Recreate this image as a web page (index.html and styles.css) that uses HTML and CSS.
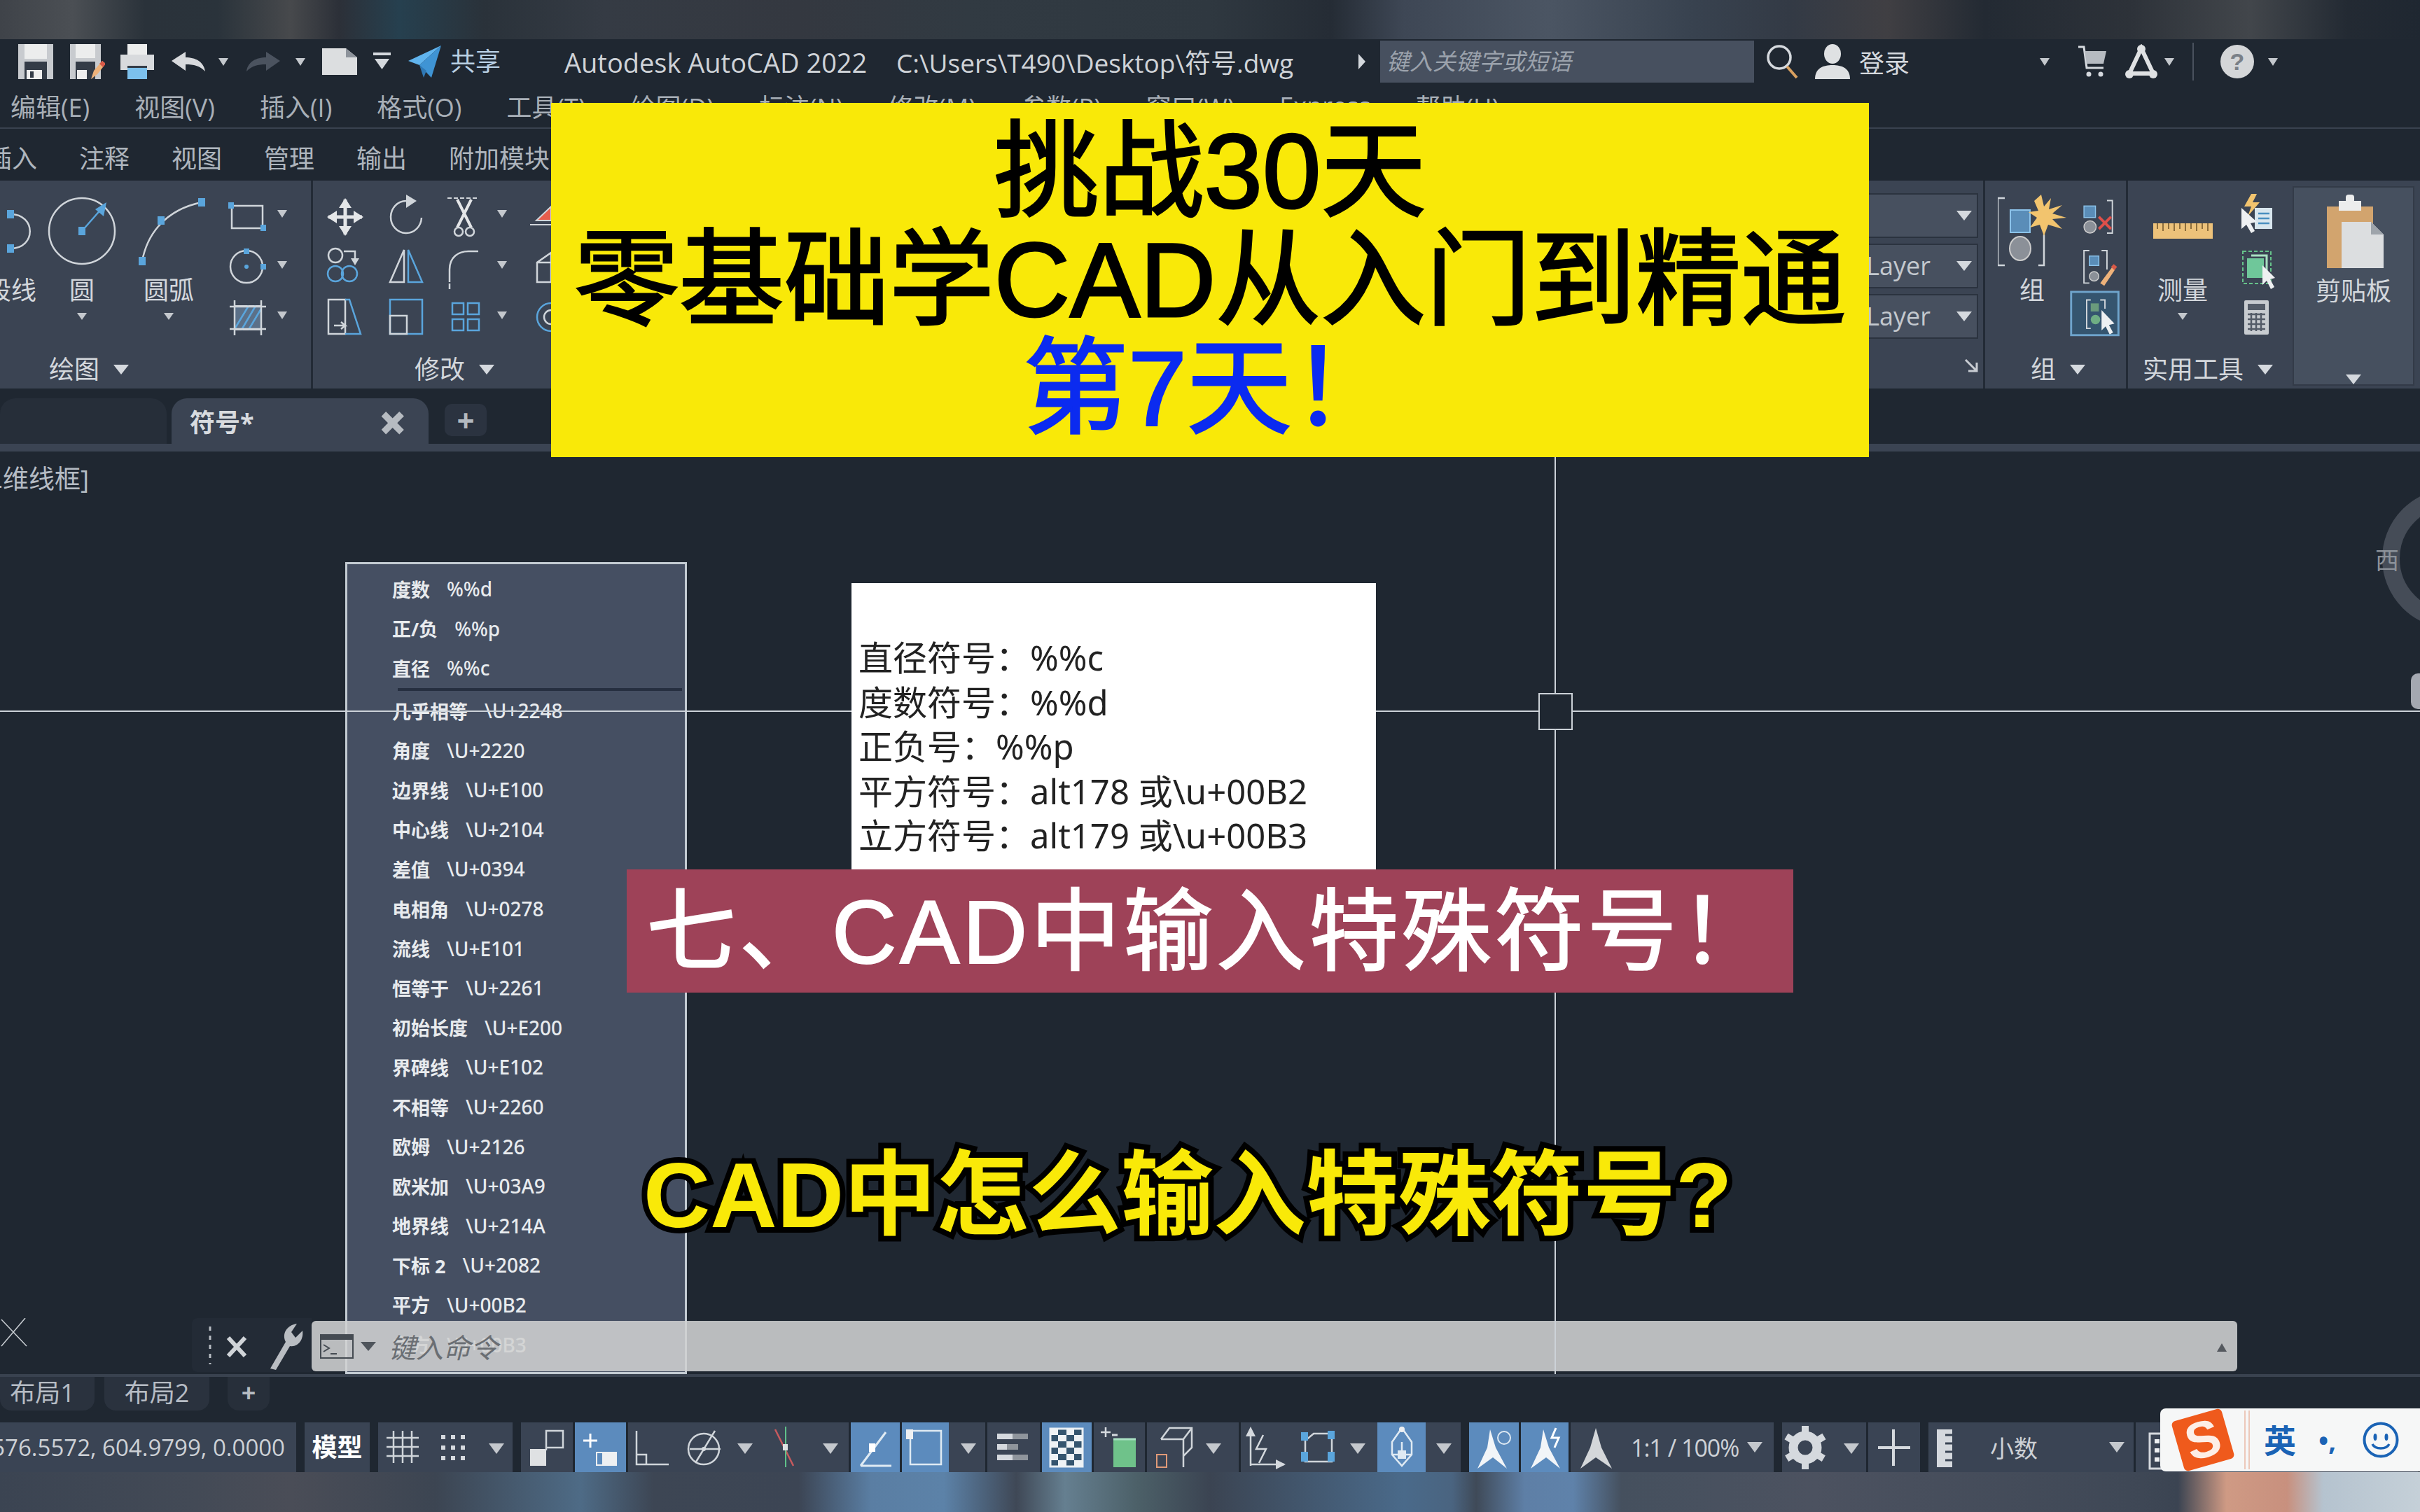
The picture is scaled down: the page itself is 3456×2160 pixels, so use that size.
FILE: index.html
```html
<!DOCTYPE html>
<html lang="zh-CN">
<head>
    <meta charset="UTF-8">
    <title>AutoCAD 2022 - 符号.dwg</title>
    <link rel="stylesheet" href="styles.css">
</head>
<body>
<div class="app">
    <div class="strip strip-top"></div>

    <!-- Title bar -->
    <header class="titlebar">
        <div class="qat">
            <svg width="50" height="50" viewBox="0 0 50 50"><rect width="50" height="50" fill="#c8cbcf"/><rect x="9" y="0" width="32" height="21" fill="#eceded"/><rect x="9" y="25" width="32" height="25" fill="#343c47"/><rect x="12" y="37" width="22" height="13" fill="#eee"/><rect x="17" y="39" width="5" height="9" fill="#343c47"/></svg>
            <svg width="50" height="50" viewBox="0 0 50 50"><rect width="44" height="50" fill="#c8cbcf"/><rect x="8" y="0" width="28" height="20" fill="#eceded"/><rect x="8" y="25" width="28" height="25" fill="#343c47"/><rect x="10" y="37" width="14" height="13" fill="#eee"/><path d="M30 50l4-12 12-14 5 4-12 15z" fill="#eeb27a"/><path d="M42 28l4-4 5 4-4 5z" fill="#d85a48"/></svg>
            <svg width="48" height="50" viewBox="0 0 48 50"><rect x="10" width="28" height="15" fill="#eceded"/><rect y="15" width="48" height="22" fill="#d8dadd"/><rect x="10" y="33" width="28" height="17" fill="#7cc0ec"/><rect x="10" y="31" width="28" height="3" fill="#343c47"/></svg>
            <svg width="48" height="28" viewBox="0 0 48 28"><path d="M0 13L20 0v8c14 0 26 6 28 20C40 20 32 18 20 18v9z" fill="#d8dadd"/></svg>
            <i class="qcaret"></i>
            <svg width="48" height="28" viewBox="0 0 48 28"><path d="M48 13L28 0v8C14 8 2 14 0 28c8-8 16-10 28-10v9z" fill="#4b535f"/></svg>
            <i class="qcaret"></i>
            <svg width="50" height="38" viewBox="0 0 50 38"><path d="M0 0H34L50 13V38H0z" fill="#dcdee0"/><path d="M34 0V13H50z" fill="#8d939b"/></svg>
            <svg width="25" height="26" viewBox="0 0 25 26"><rect width="25" height="4" fill="#d5d9de"/><path d="M2 9H23L12.500 24z" fill="#d5d9de"/></svg>
            <svg width="47" height="46" viewBox="0 0 47 46"><path d="M47 0L0 22 16 28z" fill="#60b4ee"/><path d="M47 0L16 28 33 46z" fill="#3f94d4"/><path d="M16 28L22 46 26 36z" fill="#2f78b4"/></svg>
            <span class="share">共享</span>
        </div>
        <div class="doc-title">Autodesk AutoCAD 2022&nbsp;&nbsp;&nbsp;<span class="doc-path">C:\Users\T490\Desktop\符号.dwg</span></div>
        <i class="tri-right"></i>
        <div class="search">键入关键字或短语</div>
        <svg class="ico-search" width="46" height="50" viewBox="0 0 46 50"><circle cx="19" cy="19" r="16" fill="none" stroke="#d5d9de" stroke-width="3.500"/><path d="M30 32L44 48" stroke="#d8a060" stroke-width="4"/></svg>
        <svg class="ico-user" width="50" height="50" viewBox="0 0 50 50"><ellipse cx="25" cy="14" rx="12" ry="14" fill="#dfe1e3"/><path d="M0 50C0 34 12 30 25 30s25 4 25 20z" fill="#dfe1e3"/></svg>
        <span class="login">登录</span>
        <i class="qcaret login-caret"></i>
        <svg class="ico-cart" width="40" height="46" viewBox="0 0 40 46"><path d="M0 2H8L12 32H36" fill="none" stroke="#d5d9de" stroke-width="3"/><path d="M9 8H40L36 26H12z" fill="#b6bbc1"/><circle cx="15" cy="41" r="3.500" fill="#d5d9de"/><circle cx="32" cy="41" r="3.500" fill="#d5d9de"/></svg>
        <svg class="ico-a360" width="46" height="50" viewBox="0 0 46 50"><path d="M23 6L6 42H40z" fill="none" stroke="#dfe1e3" stroke-width="6"/><circle cx="23" cy="7" r="6" fill="#dfe1e3"/><circle cx="6" cy="43" r="6" fill="#dfe1e3"/><circle cx="40" cy="43" r="6" fill="#dfe1e3"/></svg>
        <i class="qcaret a360-caret"></i>
        <b class="title-sep"></b>
        <div class="help">?</div>
        <i class="qcaret help-caret"></i>
    </header>

    <!-- Menu bar -->
    <nav class="menubar">
        <span>编辑(E)</span><span>视图(V)</span><span>插入(I)</span><span>格式(O)</span><span>工具(T)</span><span>绘图(D)</span><span>标注(N)</span><span>修改(M)</span><span>参数(P)</span><span>窗口(W)</span><span>Express</span><span>帮助(H)</span>
    </nav>

    <!-- Ribbon tabs -->
    <nav class="ribbon-tabs">
        <span class="cut">插入</span><span>注释</span><span>视图</span><span>管理</span><span>输出</span><span>附加模块</span>
    </nav>

    <!-- Ribbon -->
    <section class="ribbon">
        <div class="panel panel-draw">
            <div class="panel-body">
                <div class="big big-pline">
                    <svg width="52" height="110" viewBox="0 0 52 110"><path d="M15 31C52 31 52 80 15 80" class="ln"/><rect x="10" y="25" width="10" height="12" class="grip"/><rect x="10" y="74" width="10" height="12" class="grip"/></svg>
                    <span class="cut-label">段线</span>
                </div>
                <div class="big big-circle">
                    <svg width="110" height="110" viewBox="0 0 110 110"><circle cx="55" cy="55" r="47" class="ln"/><path d="M55 55L84 22" class="blu"/><path d="M74 24L90 14 86 34z" fill="#5aa5dc"/><rect x="50" y="49" width="10" height="12" class="grip"/></svg>
                    <span>圆</span><i class="sm-caret"></i>
                </div>
                <div class="big big-arc">
                    <svg width="118" height="110" viewBox="0 0 118 110"><path d="M21 98C27 66 48 26 106 14" class="ln"/><rect x="16" y="92" width="10" height="12" class="grip"/><rect x="43" y="34" width="10" height="12" class="grip"/><rect x="101" y="8" width="10" height="12" class="grip"/></svg>
                    <span>圆弧</span><i class="sm-caret"></i>
                </div>
                <svg class="draw-small" width="130" height="220" viewBox="0 0 130 220">
                    <rect x="21" y="19" width="44" height="32" class="ln"/><rect x="16" y="14" width="8" height="9" class="grip"/><rect x="62" y="46" width="8" height="9" class="grip"/>
                    <path d="M86 25h14l-7 11z" class="car"/>
                    <circle cx="42" cy="106" r="23" class="ln"/><circle cx="42" cy="106" r="3" class="grip"/><rect x="38" y="80" width="8" height="8" class="grip"/><rect x="62" y="102" width="8" height="8" class="grip"/>
                    <path d="M86 98h14l-7 11z" class="car"/>
                    <rect x="25" y="162" width="38" height="34" fill="#5b7088" stroke="#d0d5da" stroke-width="2"/><path d="M25 195L45 162M35 196L55 162M45 196L63 166" class="blu"/><path d="M18 163H70M18 195H70M25 154V204M63 154V204" class="ln"/>
                    <path d="M86 170h14l-7 11z" class="car"/>
                </svg>
            </div>
            <div class="panel-foot">绘图<i class="foot-caret"></i></div>
        </div>

        <div class="panel panel-modify">
            <div class="panel-body">
                <svg width="342" height="225" viewBox="0 0 342 225">
                    <path d="M46 10V60M22 35H70" stroke="#e4e6e8" stroke-width="5"/><path d="M46 8l-9 14h18zM46 62l-9-14h18zM20 35l14-9v18zM72 35l-14-9v18z" fill="#e4e6e8"/>
                    <path d="M133 12A22 23 0 1 0 155 36" class="ln"/><path d="M133 3l15 9-15 10z" fill="#d0d5da"/>
                    <path d="M192 8H236" stroke="#d0d5da" stroke-width="2" stroke-dasharray="6 3"/><path d="M206 10L226 50M226 10L206 50" stroke="#e4e6e8" stroke-width="4"/><circle cx="208" cy="56" r="6" class="ln"/><circle cx="224" cy="56" r="6" class="ln"/>
                    <path d="M263 25h14l-7 11z" class="car"/>
                    <path d="M319 40L340 20V40zM310 46H340" fill="#e85d4c" stroke="#d0d5da" stroke-width="2"/>
                    <circle cx="32" cy="90" r="10" class="ln"/><path d="M44 84H60V100" class="ln"/><path d="M60 104l-6-10h12z" fill="#d0d5da"/><circle cx="32" cy="116" r="11" class="blu"/><circle cx="52" cy="116" r="11" class="blu"/>
                    <path d="M110 128L130 82V128z" class="ln"/><path d="M136 82V128H156z" class="blu"/>
                    <path d="M195 128V110C195 92 208 84 222 84" class="ln"/><path d="M222 84H236M195 130V138" class="ln"/>
                    <path d="M263 98h14l-7 11z" class="car"/>
                    <path d="M320 128V100L340 86V128zM320 100H340" class="ln"/>
                    <path d="M22 153H46V202H22z" class="ln"/><path d="M46 153H52L68 202H46" class="blu"/><path d="M30 190H46l-6-5M46 190l-6 5" class="ln"/>
                    <path d="M110 153H156V202H110z" class="blu"/><path d="M110 176H134V202H110z" class="ln"/>
                    <path d="M199 158h16v16h-16zM221 158h16v16h-16zM199 181h16v16h-16zM221 181h16v16h-16z" class="blu"/>
                    <path d="M263 170h14l-7 11z" class="car"/>
                    <circle cx="340" cy="178" r="20" class="blu"/><circle cx="340" cy="178" r="10" class="ln"/>
                </svg>
            </div>
            <div class="panel-foot">修改<i class="foot-caret"></i></div>
        </div>

        <div class="panel panel-layer">
            <div class="combo"><i class="foot-caret"></i></div>
            <div class="combo">ByLayer<i class="foot-caret"></i></div>
            <div class="combo">ByLayer<i class="foot-caret"></i></div>
            <svg class="corner" width="20" height="20" viewBox="0 0 20 20"><path d="M2 2L18 18M18 6V18H6" fill="none" stroke="#c8ccd2" stroke-width="3"/></svg>
        </div>

        <div class="panel panel-group">
            <div class="panel-body">
                <div class="big big-group">
                    <svg width="98" height="110" viewBox="0 0 98 110">
                        <path d="M10 8H0V104H10M66 60V104H58" fill="none" stroke="#d0d5da" stroke-width="2.500"/>
                        <rect x="18" y="25" width="28" height="32" fill="#5a8db8" stroke="#8cc3ea" stroke-width="2"/>
                        <ellipse cx="32" cy="80" rx="15" ry="17" fill="#8b9098" stroke="#ccc" stroke-width="2"/>
                        <path d="M62 3L66 20 76 8 73 24 92 18 78 30 98 36 78 38 92 52 72 46 66 62 60 46 46 50 56 36 44 28 58 26 52 12z" fill="#f2c46e"/>
                    </svg>
                    <span>组</span>
                </div>
                <svg width="88" height="225" viewBox="0 0 88 225">
                    <path d="M60 8H68V56H60" fill="none" stroke="#d0d5da" stroke-width="2"/><rect x="26" y="16" width="17" height="17" fill="#5a8db8" stroke="#8cc3ea" stroke-width="1.500"/><circle cx="35" cy="47" r="9" fill="#8b9098" stroke="#ccc" stroke-width="1.500"/><path d="M48 32L66 50M66 32L48 50" stroke="#e0504a" stroke-width="4"/>
                    <path d="M34 82H26V130H34M52 82H60V110" fill="none" stroke="#d0d5da" stroke-width="2"/><rect x="34" y="90" width="14" height="14" fill="#5a8db8" stroke="#8cc3ea" stroke-width="1.500"/><circle cx="41" cy="120" r="7" fill="#8b9098" stroke="#ccc" stroke-width="1.500"/><path d="M50 130L68 106 72 110 56 134z" fill="#eeb27a"/><path d="M66 106l4-4 5 4-4 5z" fill="#d85a48"/>
                    <rect x="7" y="143" width="70" height="64" fill="#35556f" stroke="#6fa5cd" stroke-width="3"/>
                    <path d="M36 155H30V197H36M50 155H57V168" fill="none" stroke="#d0d5da" stroke-width="2"/><rect x="36" y="160" width="12" height="12" fill="#6a9a7c"/><circle cx="43" cy="184" r="7" fill="#6fae84"/><path d="M52 170V200L58 194 64 206 69 203 63 192 71 190z" fill="#eef0f2"/>
                </svg>
            </div>
            <div class="panel-foot">组<i class="foot-caret"></i></div>
        </div>

        <div class="panel panel-util">
            <div class="panel-body">
                <div class="big big-measure">
                    <svg width="156" height="110" viewBox="0 0 156 110"><rect x="36" y="44" width="85" height="22" fill="#edc27a"/><path d="M42 44V52M50 44V55M58 44V52M66 44V55M74 44V52M82 44V55M90 44V52M98 44V55M106 44V52M114 44V55" stroke="#8d6e3c" stroke-width="2"/></svg>
                    <span>测量</span><i class="sm-caret"></i>
                </div>
                <svg width="75" height="225" viewBox="0 0 75 225">
                    <path d="M20 2L10 20H20L15 34 32 14H22L28 2z" fill="#f2c46e"/><rect x="25" y="22" width="25" height="30" fill="#d8e6ee"/><path d="M30 30H46M30 37H46M30 44H46" stroke="#4a8fc0" stroke-width="2.500"/><path d="M6 22V52L13 46 20 58 25 55 19 44 28 42z" fill="#eef0f2"/>
                    <rect x="8" y="84" width="40" height="46" fill="none" stroke="#66c28a" stroke-width="2" stroke-dasharray="5 3"/><rect x="14" y="94" width="24" height="28" fill="#6fc79a"/><path d="M20 90H42V112" fill="none" stroke="#a9e0c2" stroke-width="3"/><path d="M36 104V132L42 126 48 138 53 135 47 124 54 122z" fill="#eef0f2"/>
                    <rect x="10" y="154" width="35" height="49" rx="2" fill="#c8ccd0"/><rect x="15" y="159" width="25" height="9" fill="#545c68"/><path d="M15 174H40M15 181H40M15 188H40M15 195H40M20 172V198M27 172V198M34 172V198" stroke="#545c68" stroke-width="2.500"/>
                </svg>
            </div>
            <div class="panel-foot">实用工具<i class="foot-caret"></i></div>
        </div>

        <div class="panel panel-clip">
            <svg width="174" height="110" viewBox="0 0 174 110">
                <rect x="49" y="22" width="66" height="88" fill="#d2a46e"/><rect x="66" y="14" width="32" height="14" fill="#eceded"/><rect x="76" y="5" width="12" height="12" rx="4" fill="#eceded"/>
                <path d="M70 44H112L130 62V112H70z" fill="#dcdee0"/><path d="M112 44V62H130z" fill="#9ea4ab"/>
            </svg>
            <span>剪贴板</span>
            <i class="foot-caret"></i>
        </div>
    </section>

    <!-- Document tabs -->
    <div class="doc-tabs">
        <div class="doc-tab off"></div>
        <div class="doc-tab on"><span>符号*</span><b>×</b></div>
        <div class="doc-plus">+</div>
    </div>

    <!-- Drawing area -->
    <main class="viewport">
        <div class="compass-ring"></div>
        <div class="compass">西</div>
        <div class="nav-bar"></div>

        <div class="view-label">二维线框]</div>
        <svg class="ucs" width="44" height="42" viewBox="0 0 44 42"><path d="M2 2L38 40M36 0L2 40" fill="none" stroke="#c9ced3" stroke-width="1.500"/></svg>

        <div class="symbol-menu">
            <div class="sym"><span>度数</span><span>%%d</span></div>
            <div class="sym"><span>正/负</span><span>%%p</span></div>
            <div class="sym"><span>直径</span><span>%%c</span></div>
            <div class="sym-sep"></div>
            <div class="sym"><span>几乎相等</span><span>\U+2248</span></div>
            <div class="sym"><span>角度</span><span>\U+2220</span></div>
            <div class="sym"><span>边界线</span><span>\U+E100</span></div>
            <div class="sym"><span>中心线</span><span>\U+2104</span></div>
            <div class="sym"><span>差值</span><span>\U+0394</span></div>
            <div class="sym"><span>电相角</span><span>\U+0278</span></div>
            <div class="sym"><span>流线</span><span>\U+E101</span></div>
            <div class="sym"><span>恒等于</span><span>\U+2261</span></div>
            <div class="sym"><span>初始长度</span><span>\U+E200</span></div>
            <div class="sym"><span>界碑线</span><span>\U+E102</span></div>
            <div class="sym"><span>不相等</span><span>\U+2260</span></div>
            <div class="sym"><span>欧姆</span><span>\U+2126</span></div>
            <div class="sym"><span>欧米加</span><span>\U+03A9</span></div>
            <div class="sym"><span>地界线</span><span>\U+214A</span></div>
            <div class="sym"><span>下标 2</span><span>\U+2082</span></div>
            <div class="sym"><span>平方</span><span>\U+00B2</span></div>
            <div class="sym"><span>立方</span><span>\U+00B3</span></div>
        </div>

        <div class="cmd-tools">
            <svg width="171" height="77" viewBox="0 0 171 77"><path d="M26 12V66" stroke="#b8bdc3" stroke-width="3" stroke-dasharray="6 7"/><path d="M52 28L76 54M76 28L52 54" stroke="#d0d4d8" stroke-width="6"/><path d="M112 72L134 34C128 22 136 10 150 8L142 20 148 28 158 18C160 30 152 42 140 40L120 74z" fill="#b9bdc2"/></svg>
        </div>
        <div class="cmd-line">
            <svg width="48" height="35" viewBox="0 0 48 35"><rect x="1" y="1" width="46" height="33" fill="none" stroke="#454b52" stroke-width="2"/><rect x="1" y="1" width="46" height="7" fill="#454b52"/><path d="M5 15L13 20 5 25M15 28H24" fill="none" stroke="#454b52" stroke-width="2"/></svg>
            <i class="cmd-caret"></i>
            <span class="cmd-prompt">键入命令</span>
            <i class="cmd-up"></i>
        </div>

        <div class="cross-h"></div>
        <div class="cross-v"></div>
        <div class="pickbox"></div>

        <div class="symbol-note">
            <div>直径符号：%%c</div>
            <div>度数符号：%%d</div>
            <div>正负号：%%p</div>
            <div>平方符号：alt178 或\u+00B2</div>
            <div>立方符号：alt179 或\u+00B3</div>
        </div>
    </main>

    <!-- Layout tabs -->
    <div class="layout-tabs">
        <div class="lt lt-1">布局1</div>
        <div class="lt lt-2">布局2</div>
        <div class="lt lt-plus">+</div>
    </div>

    <!-- Status bar -->
    <footer class="statusbar">
        <div class="st st-coord brk"><span>576.5572, 604.9799, 0.0000</span></div>
        <div class="st st-model brk">模型</div>
        <div class="st brk"><svg width="192" height="71" viewBox="0 0 192 71"><path d="M12 22H58M12 35H58M12 48H58M22 12V58M35 12V58M48 12V58" class="ln"/><path d="M90 18h6v6h-6zM104 18h6v6h-6zM118 18h6v6h-6zM90 33h6v6h-6zM104 33h6v6h-6zM118 33h6v6h-6zM90 48h6v6h-6zM104 48h6v6h-6zM118 48h6v6h-6z" fill="#d5d9de"/><path d="M158 30h22l-11 15z" class="car"/></svg></div>
        <div class="st"><svg width="73" height="71" viewBox="0 0 73 71"><rect x="13" y="38" width="23" height="24" fill="#dfe1e3"/><path d="M36 40V12H60V36H36" class="ln"/></svg></div>
        <div class="st on"><svg width="70" height="71" viewBox="0 0 70 71"><path d="M12 26H32M22 16V36" stroke="#fff" stroke-width="3"/><rect x="30" y="42" width="30" height="20" fill="#eef0f2"/><rect x="32" y="44" width="7" height="16" fill="#5c8bbd"/></svg></div>
        <div class="st"><svg width="313" height="71" viewBox="0 0 313 71"><path d="M12 12V60H58M12 46H26V60" class="ln"/><circle cx="108" cy="38" r="22" class="ln"/><path d="M88 38H132M96 58L124 12" class="ln"/><circle cx="108" cy="38" r="3" fill="#d5d9de"/><path d="M156 30h22l-11 15z" class="car"/><path d="M210 10L236 62" stroke="#c75a5e" stroke-width="2.500"/><path d="M225 6V64" stroke="#5fc28a" stroke-width="2"/><rect x="221" y="31" width="7" height="9" fill="#dfe1e3"/><path d="M278 30h22l-11 15z" class="car"/></svg></div>
        <div class="st on"><svg width="70" height="71" viewBox="0 0 70 71"><path d="M14 62L50 14M14 62H58" stroke="#dfeaf3" stroke-width="3" fill="none"/><rect x="26" y="30" width="9" height="12" fill="#fff"/></svg></div>
        <div class="st"><svg width="117" height="71" viewBox="0 0 117 71"><rect width="67" height="71" fill="#5c8bbd"/><path d="M12 12V60H56V12z" fill="none" stroke="#dfeaf3" stroke-width="2.500"/><rect x="6" y="10" width="10" height="14" fill="#eef0f2"/><path d="M84 30h22l-11 15z" class="car"/></svg></div>
        <div class="st"><svg width="76" height="71" viewBox="0 0 76 71"><path d="M14 16H58V24H14zM14 31H44V39H14zM14 46H58V54H14z" fill="#d5d9de"/><path d="M36 16H58V24H36zM28 31H44V39H28zM36 46H58V54H36z" fill="#8f959c"/></svg></div>
        <div class="st on"><svg width="70" height="71" viewBox="0 0 70 71"><rect x="12" y="9" width="46" height="54" fill="#35556f" stroke="#e8eef3" stroke-width="3"/><path d="M12 9h11v9H12zM35 9h11v9H35zM23 18h12v9H23zM46 18h12v9H46zM12 27h11v9H12zM35 27h11v9H35zM23 36h12v9H23zM46 36h12v9H46zM12 45h11v9H12zM35 45h11v9H35zM23 54h12v9H23zM46 54h12v9H46z" fill="#eef2f5"/></svg></div>
        <div class="st"><svg width="74" height="71" viewBox="0 0 74 71"><path d="M10 14H24M17 7V21" stroke="#d5d9de" stroke-width="2.500"/><path d="M26 18H34" stroke="#d5d9de" stroke-width="3"/><path d="M28 24H60V64H28z" fill="#6fc28a"/><path d="M28 24H60" stroke="#a9e0c2" stroke-width="3"/></svg></div>
        <div class="st"><svg width="124" height="71" viewBox="0 0 124 71"><path d="M20 24L32 8H64V36L52 48V64M20 24H52V50M52 24L64 8" class="ln"/><rect x="14" y="46" width="14" height="18" fill="none" stroke="#e09a78" stroke-width="2"/><path d="M84 30h22l-11 15z" class="car"/></svg></div>
        <div class="st brk"><svg width="315" height="71" viewBox="0 0 315 71"><path d="M14 62V16M14 60H62" class="ln"/><path d="M14 6l-7 14h14zM64 60l-14-7v14z" fill="#d5d9de"/><path d="M32 18L22 38H36L26 58" fill="none" stroke="#d5d9de" stroke-width="2.500"/><path d="M92 26L104 16H130V56H92z" class="ln"/><rect x="86" y="14" width="10" height="12" class="grip"/><rect x="124" y="12" width="10" height="12" class="grip"/><rect x="86" y="42" width="10" height="14" class="grip"/><rect x="124" y="42" width="10" height="14" class="grip"/><path d="M156 30h22l-11 15z" class="car"/><rect x="195" width="69" height="71" fill="#5c8bbd"/><path d="M230 8L244 28V46L230 62 216 46V28zM216 46H244M230 28V46" fill="none" stroke="#dfeaf3" stroke-width="2.500"/><circle cx="230" cy="10" r="4" fill="#eef0f2"/><rect x="224" y="40" width="12" height="12" fill="#dfeaf3"/><path d="M279 30h22l-11 15z" class="car"/></svg></div>
        <div class="st on"><svg width="71" height="71" viewBox="0 0 71 71"><path d="M30 10L38 36 54 66 34 50 12 66 26 36z" fill="#f2f5f8"/><circle cx="50" cy="22" r="9" fill="none" stroke="#dfeaf3" stroke-width="2"/></svg></div>
        <div class="st on"><svg width="69" height="71" viewBox="0 0 69 71"><path d="M32 10L40 36 56 66 36 50 14 66 28 36z" fill="#f2f5f8"/><path d="M50 8L44 22H54L48 36" fill="none" stroke="#fff" stroke-width="3"/></svg></div>
        <div class="st st-scale brk"><svg width="86" height="71" viewBox="0 0 86 71"><path d="M36 8L44 36 59 66 36 50 14 66 28 36z" fill="#d4d7da"/></svg><span>1:1 / 100%</span><i class="st-caret"></i></div>
        <div class="st"><svg width="119" height="71" viewBox="0 0 119 71"><circle cx="33" cy="36" r="17" fill="none" stroke="#d5d9de" stroke-width="13"/><path d="M33 5V67M6 20L60 52M60 20L6 52" stroke="#d5d9de" stroke-width="10" stroke-dasharray="11 40 11"/><path d="M88 30h22l-11 15z" class="car"/></svg></div>
        <div class="st brk"><svg width="73" height="71" viewBox="0 0 73 71"><path d="M36 10V62M14 36H60" stroke="#d5d9de" stroke-width="4"/></svg></div>
        <div class="st st-unit"><svg width="40" height="71" viewBox="0 0 40 71"><rect x="12" y="10" width="22" height="54" fill="#d5d9de"/><path d="M24 18H34M24 30H34M24 42H34M24 54H34" stroke="#3a4454" stroke-width="3"/></svg><span>小数</span><i class="st-caret"></i></div>
        <div class="st"><svg width="60" height="71" viewBox="0 0 60 71"><rect x="20" y="16" width="24" height="50" fill="#3a4454" stroke="#d5d9de" stroke-width="3"/><path d="M27 24h7v6h-7zM27 37h7v6h-7zM27 50h7v6h-7z" fill="#eef0f2"/></svg></div>
    </footer>

    <div class="strip strip-bottom"></div>

    <!-- Video overlays -->
    <div class="banner-yellow">
        <div>挑战30天</div>
        <div>零基础学CAD从入门到精通</div>
        <div>第7天！</div>
    </div>
    <div class="banner-red">七、CAD中输入特殊符号！</div>
    <div class="subtitle">CAD中怎么输入特殊符号?</div>

    <div class="ime">
        <span class="ime-logo"><b>S</b></span>
        <i class="ime-sep"></i>
        <span class="ime-lang">英</span>
        <span class="ime-punct">•,</span>
        <svg width="52" height="52" viewBox="0 0 52 52"><circle cx="26" cy="26" r="23.500" fill="none" stroke="#1a63b5" stroke-width="4"/><ellipse cx="18" cy="22" rx="2.500" ry="5" fill="#1a63b5"/><ellipse cx="34" cy="22" rx="2.500" ry="5" fill="#1a63b5"/><path d="M14 32C18 40 34 40 38 32" fill="none" stroke="#1a63b5" stroke-width="3.500"/></svg>
    </div>
</div>
</body>
</html>
```

FILE: styles.css
```css
* {
    box-sizing: border-box;
    margin: 0;
    padding: 0;
}

body {
    background: #1f2731;
    font-family: "Open Sans", "Noto Sans CJK SC", sans-serif;
    overflow: hidden;
}

i, b {
    font-style: normal;
    display: block;
    flex: none;
}

.app {
    position: relative;
    width: 3456px;
    height: 2160px;
    overflow: hidden;
    display: flex;
    flex-direction: column;
    background: #1f2731;
}

/* Blurred video edges */
.strip {
    flex: none;
}

.strip-top {
    height: 56px;
    background: linear-gradient(90deg, #3f4349 0%, #4b4f54 3%, #2a323a 6%, #2a333b 9%, #47494c 12%, #2c3038 14%, #26404f 16.500%, #2a323a 20%, #353b44 25%, #343840 33%, #313a42 40%, #2f3840 50%, #252c35 55%, #3e4755 58%, #4b5563 64%, #38424f 70%, #333a45 74%, #403f43 78%, #232a33 82%, #2d3239 88%, #42464b 93%, #232a33 97%, #1f2731 100%);
}

.strip-bottom {
    height: 57px;
    background: linear-gradient(90deg, #3b4452 0%, #434a56 8%, #4a4d57 12%, #3c4552 18%, #4e6b86 24%, #3d4654 27%, #3c4554 33%, #5a7ea3 36%, #5c82a8 39%, #3f4856 42%, #657f90 44%, #4c6068 47%, #3b4452 50%, #4a6a8a 58%, #4a6480 60%, #3f4a58 61%, #5e7fa6 63%, #5f82aa 65%, #45505e 67%, #4c5260 75%, #3f4856 88%, #3b4452 90%, #cf9a84 92%, #c8907e 94.500%, #b5c3cf 96%, #c5d0d8 100%);
}

/* Title bar */
.titlebar {
    flex: none;
    height: 64px;
    display: flex;
    align-items: center;
    color: #d5d9de;
}

.qat {
    width: 806px;
    padding-left: 26px;
    display: grid;
    grid-template-columns: 74px 72px 73px 67px 40px 70px 38px 73px 50px 60px auto;
    align-items: center;
    justify-items: start;
}

.qcaret {
    width: 0;
    height: 0;
    border-left: 7px solid transparent;
    border-right: 7px solid transparent;
    border-top: 11px solid #c4c8cd;
}

.share {
    font-size: 36px;
    line-height: 1;
    color: #b9d0e4;
}

.doc-title {
    width: 1134px;
    font-size: 38px;
    white-space: nowrap;
    color: #cfd3d8;
}

.doc-path {
    margin-left: 12px;
    font-size: 37px;
}

.tri-right {
    width: 0;
    height: 0;
    border-top: 11px solid transparent;
    border-bottom: 11px solid transparent;
    border-left: 10px solid #d5d9de;
}

.search {
    width: 534px;
    height: 60px;
    margin-left: 21px;
    padding-left: 9px;
    background: #47505f;
    color: #9ba2ac;
    font-size: 33px;
    line-height: 60px;
    font-style: italic;
}

.ico-search { margin-left: 17px; }
.ico-user { margin-left: 24px; }

.login {
    margin-left: 13px;
    width: 258px;
    font-size: 36px;
}

.login-caret { margin-right: 41px; }
.ico-a360 { margin-left: 27px; }
.a360-caret { margin-left: 10px; }

.title-sep {
    width: 2px;
    height: 54px;
    margin-left: 26px;
    background: #4a525e;
}

.help {
    width: 48px;
    height: 48px;
    margin-left: 38px;
    border-radius: 50%;
    background: #d4d6d8;
    color: #7a8088;
    font: bold 34px/48px "Liberation Sans", sans-serif;
    text-align: center;
}

.help-caret { margin-left: 20px; }

/* Menu bar and ribbon tabs */
.menubar {
    flex: none;
    height: 64px;
    padding-left: 15px;
    display: flex;
    gap: 64px;
    align-items: center;
    border-bottom: 2px solid #39424f;
    color: #a8afb7;
    font-size: 36px;
    white-space: nowrap;
}

.ribbon-tabs {
    flex: none;
    height: 74px;
    padding: 6px 0 0 113px;
    display: flex;
    gap: 60px;
    align-items: center;
    color: #aeb5bd;
    font-size: 36px;
    white-space: nowrap;
}

.ribbon-tabs .cut {
    margin-left: -132px;
}

/* Ribbon */
.ribbon {
    flex: none;
    height: 297px;
    display: flex;
    background: #3b4453;
    color: #d3d7dc;
    font-size: 36px;
    line-height: 40px;
}

.panel {
    position: relative;
    flex: none;
    display: flex;
    flex-direction: column;
    border-right: 3px solid #232b36;
}

.panel-draw { width: 447px; }
.panel-modify { width: 345px; }
.panel-group { width: 204px; }
.panel-util { width: 231px; border-right: 0; }

.panel-body {
    display: flex;
    align-items: flex-start;
    padding-top: 17px;
}

.panel-foot {
    margin-top: auto;
    height: 54px;
    display: flex;
    align-items: center;
    gap: 20px;
}

.panel-draw .panel-foot { padding-left: 70px; }
.panel-modify .panel-foot { padding-left: 145px; }
.panel-group .panel-foot { padding-left: 65px; }
.panel-util .panel-foot { padding-left: 21px; }

.foot-caret {
    width: 0;
    height: 0;
    border-left: 11px solid transparent;
    border-right: 11px solid transparent;
    border-top: 14px solid #d5d9de;
}

.big {
    flex: none;
    display: flex;
    flex-direction: column;
    align-items: center;
}

.big > span {
    margin-top: 10px;
}

.sm-caret {
    width: 0;
    height: 0;
    margin-top: 12px;
    border-left: 7px solid transparent;
    border-right: 7px solid transparent;
    border-top: 10px solid #c4c8cd;
}

.big-pline { width: 52px; overflow: hidden; align-items: flex-end; }
.big-circle { width: 110px; margin-left: 10px; }
.big-arc { width: 118px; margin-left: 10px; }
.draw-small { margin-left: 10px; }
.big-group { width: 98px; margin-left: 18px; margin-right: 0; }
.big-measure { width: 156px; }

.cut-label { white-space: nowrap; }

/* svg line styles */
.ln { fill: none; stroke: #d0d5da; stroke-width: 2.500; }
.blu { fill: none; stroke: #5aa5dc; stroke-width: 2.500; }
.grip { fill: #5aa5dc; }
.car { fill: #c4c8cd; }

.panel-layer {
    flex: 1;
    padding-top: 18px;
    padding-right: 7px;
    align-items: flex-end;
    gap: 8px;
}

.combo {
    width: 300px;
    height: 64px;
    padding-right: 7px;
    display: flex;
    align-items: center;
    justify-content: flex-end;
    gap: 37px;
    background: #47505f;
    border: 2px solid #2b333f;
    font-size: 36px;
    color: #c3c8ce;
}

.corner {
    margin-top: 20px;
}

.panel-clip {
    width: 174px;
    margin: 8px 8px 4px 4px;
    background: #46505f;
    border: 2px solid #333b48;
    align-items: center;
    padding-top: 5px;
}

.panel-clip span {
    margin-top: 13px;
}

.panel-clip .foot-caret {
    margin-top: 99px;
}

/* Document tabs */
.doc-tabs {
    flex: none;
    height: 90px;
    padding-top: 14px;
    display: flex;
    border-bottom: 11px solid #3b4453;
}

.doc-tab {
    height: 65px;
    border-radius: 22px 22px 0 0;
}

.doc-tab.off {
    width: 238px;
    background: #262e39;
}

.doc-tab.on {
    width: 367px;
    margin-left: 7px;
    padding: 0 30px 0 26px;
    display: flex;
    align-items: center;
    justify-content: space-between;
    background: #3b4453;
    color: #d8dbdf;
    font-size: 36px;
    font-weight: bold;
}

.doc-tab.on b {
    color: #b6bbc1;
    font-size: 72px;
    line-height: 60px;
}

.doc-plus {
    width: 60px;
    height: 46px;
    margin: 8px 0 0 23px;
    border-radius: 10px;
    background: #2b3340;
    color: #b2b8bf;
    font-size: 44px;
    font-weight: bold;
    line-height: 46px;
    text-align: center;
}

/* Drawing area */
.viewport {
    position: relative;
    flex: none;
    height: 1322px;
    border-bottom: 4px solid #39424f;
}

.view-label {
    position: absolute;
    top: 10px;
    left: -33px;
    color: #b5bcc4;
    font-size: 37px;
}

.ucs {
    position: absolute;
    left: 0;
    top: 1238px;
}

.compass-ring {
    position: absolute;
    left: 3402px;
    top: 53px;
    width: 200px;
    height: 200px;
    border: 25px solid #454c57;
    border-radius: 50%;
}

.compass {
    position: absolute;
    left: 3392px;
    top: 135px;
    color: #8c929a;
    font-size: 34px;
    line-height: 40px;
}

.nav-bar {
    position: absolute;
    left: 3443px;
    top: 317px;
    width: 40px;
    height: 51px;
    border-radius: 10px;
    background: #a4a8b1;
}

.symbol-menu {
    position: absolute;
    left: 493px;
    top: 158px;
    width: 488px;
    height: 1160px;
    padding: 7px 0 0 64px;
    background: #454f62;
    border: 3px solid #c3cbd2;
    color: #e8ebee;
    font-size: 27px;
    font-weight: bold;
    overflow: hidden;
}

.sym {
    height: 56.600px;
    display: flex;
    gap: 24px;
    align-items: center;
    white-space: nowrap;
}

.sym span + span {
    font-family: "Noto Sans", sans-serif;
    font-size: 28px;
    font-weight: 500;
}

.sym-sep {
    height: 4px;
    margin: 0 4px 0 8px;
    background: #262f40;
}

.cmd-tools {
    position: absolute;
    left: 274px;
    top: 1238px;
    width: 171px;
    height: 77px;
    background: #232b36;
    border-radius: 8px 0 0 8px;
}

.cmd-line {
    position: absolute;
    left: 445px;
    top: 1242px;
    width: 2750px;
    height: 72px;
    padding-left: 12px;
    display: flex;
    align-items: center;
    background: rgba(208, 209, 210, 0.880);
    border-radius: 6px;
}

.cmd-caret {
    width: 0;
    height: 0;
    margin-left: 10px;
    border-left: 11px solid transparent;
    border-right: 11px solid transparent;
    border-top: 13px solid #4f555c;
}

.cmd-prompt {
    margin-left: 18px;
    color: #6a6e73;
    font-size: 39px;
    font-style: italic;
}

.cmd-up {
    position: absolute;
    right: 15px;
    top: 32px;
    width: 0;
    height: 0;
    border-left: 7px solid transparent;
    border-right: 7px solid transparent;
    border-bottom: 12px solid #55595f;
}

.cross-h {
    position: absolute;
    left: 0;
    right: 0;
    top: 370px;
    height: 2px;
    background: #ccd2d8;
}

.cross-v {
    position: absolute;
    left: 2220px;
    top: 0;
    bottom: 0;
    width: 2px;
    background: #ccd2d8;
}

.pickbox {
    position: absolute;
    left: 2197px;
    top: 345px;
    width: 49px;
    height: 53px;
    border: 2px solid #ccd2d8;
    background: #1f2731;
}

.symbol-note {
    position: absolute;
    left: 1216px;
    top: 188px;
    width: 749px;
    height: 409px;
    padding: 75px 0 0 10px;
    background: #fff;
    color: #222;
    font-family: "Noto Sans", "Noto Sans CJK SC", sans-serif;
    font-size: 49px;
    line-height: 63.500px;
    white-space: nowrap;
}

/* Layout tabs */
.layout-tabs {
    flex: none;
    height: 65px;
    display: flex;
    align-items: flex-start;
    color: #b6bcc4;
    font-size: 36px;
}

.lt {
    height: 48px;
    line-height: 46px;
    text-align: center;
    background: #2a323e;
    border-radius: 0 0 16px 16px;
}

.lt-1 { width: 135px; padding-right: 14px; }
.lt-2 { width: 150px; margin-left: 14px; }
.lt-plus { width: 60px; margin-left: 26px; font-weight: bold; background: #272f3a; }

/* Status bar */
.statusbar {
    flex: none;
    height: 71px;
    display: grid;
    grid-template-columns: 435px 105px 204px 77px 76px 318px 73px 122px 78px 74px 76px 134px 326px 74px 71px 302px 123px 86px 296px 406px;
    color: #cdd1d6;
}

.st {
    margin-right: 3px;
    background: #3a4454;
    overflow: hidden;
}

.st.brk { margin-right: 12px; }
.st.on { background: #5c8bbd; }

.st svg { display: block; }

.st-coord {
    display: flex;
    justify-content: flex-end;
    padding-right: 16px;
    font-size: 33px;
    line-height: 71px;
    white-space: nowrap;
}

.st-model {
    color: #fff;
    font-size: 36px;
    font-weight: bold;
    line-height: 71px;
    text-align: center;
}

.st-scale, .st-unit {
    display: flex;
    align-items: center;
    font-size: 34px;
}

.st-scale span {
    white-space: nowrap;
    letter-spacing: -1px;
    margin-right: 12px;
}

.st-unit span {
    margin-left: 48px;
    margin-right: 102px;
    font-size: 34px;
}

.st-caret {
    width: 0;
    height: 0;
    border-left: 11px solid transparent;
    border-right: 11px solid transparent;
    border-top: 15px solid #c4c8cd;
}

/* Video overlays */
.banner-yellow {
    position: absolute;
    left: 787px;
    top: 147px;
    width: 1882px;
    height: 506px;
    display: flex;
    flex-direction: column;
    align-items: center;
    justify-content: center;
    background: #f9e908;
    color: #000;
    font-family: "Liberation Sans", "Noto Sans CJK SC", sans-serif;
    font-size: 150px;
    line-height: 155px;
    -webkit-text-stroke: 3px currentColor;
    white-space: nowrap;
}

.banner-yellow div:last-child {
    color: #0b2bf0;
}

.banner-red {
    position: absolute;
    left: 895px;
    top: 1242px;
    width: 1666px;
    height: 176px;
    padding-left: 28px;
    background: #9e4258;
    color: #fff;
    font-family: "Liberation Sans", "Noto Sans CJK SC", sans-serif;
    font-size: 128px;
    line-height: 180px;
    letter-spacing: 4.500px;
    -webkit-text-stroke: 2px #fff;
    white-space: nowrap;
}

.subtitle {
    position: absolute;
    left: 919px;
    top: 1630px;
    color: #f9e908;
    font-family: "Liberation Sans", "Noto Sans CJK SC", sans-serif;
    font-size: 132px;
    font-weight: bold;
    line-height: 156px;
    -webkit-text-stroke: 16px #000;
    paint-order: stroke fill;
    white-space: nowrap;
}

.ime {
    position: absolute;
    left: 3085px;
    top: 2012px;
    width: 371px;
    height: 90px;
    display: flex;
    align-items: center;
    background: #f6f7f7;
    border-radius: 8px 0 0 8px;
}

.ime-logo {
    width: 74px;
    height: 74px;
    margin-left: 24px;
    background: #ef5a1c;
    border-radius: 6px;
    transform: rotate(-16deg);
    display: flex;
    align-items: center;
    justify-content: center;
    color: #fdeee6;
    font: italic bold 74px/1 "Liberation Sans", sans-serif;
    transform-origin: center;
}

.ime-sep {
    width: 8px;
    height: 84px;
    margin-left: 22px;
    border-left: 2px solid #ecc8ba;
    border-right: 2px solid #ecc8ba;
}

.ime-lang {
    margin-left: 20px;
    color: #1a63b5;
    font-size: 46px;
    font-weight: bold;
    line-height: 1;
}

.ime-punct {
    margin-left: 32px;
    width: 28px;
    color: #1a63b5;
    font-size: 38px;
    font-weight: bold;
    line-height: 1;
    white-space: nowrap;
}

.ime svg {
    margin-left: 35px;
}
```
